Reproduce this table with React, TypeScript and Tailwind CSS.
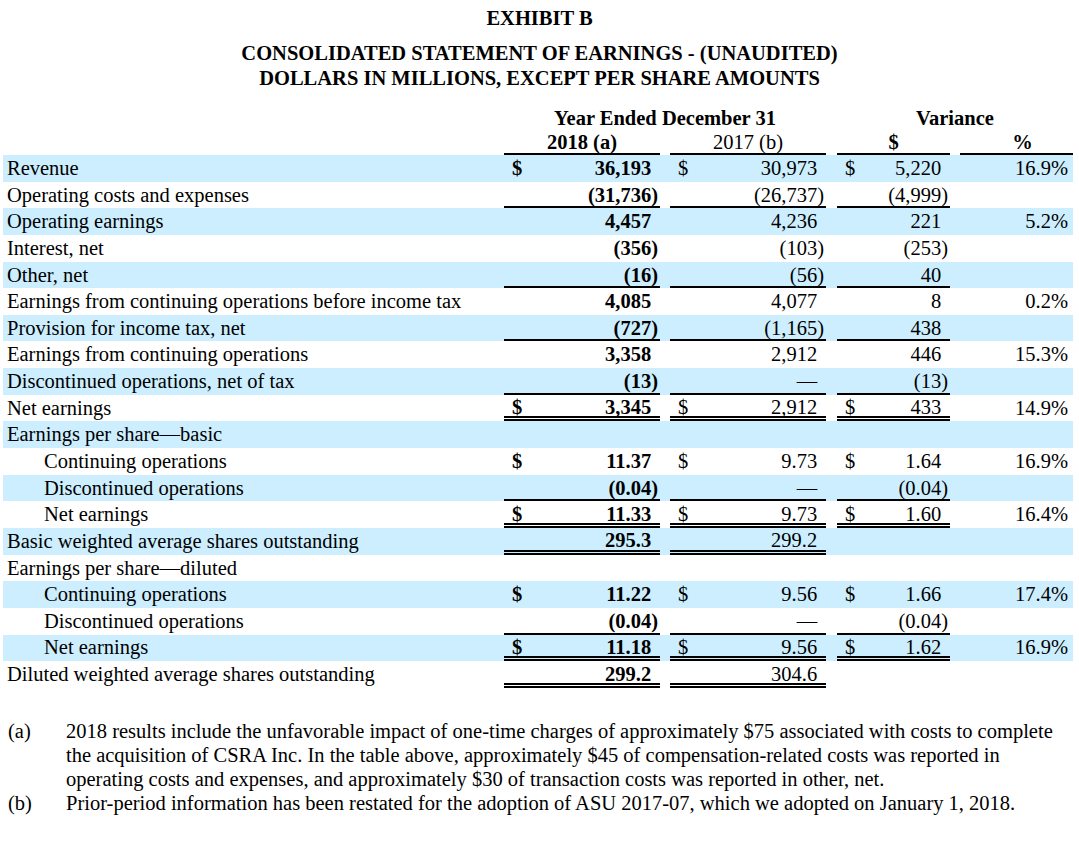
import React from "react";

type Cell = string | [string, string] | null;

type Row = {
  label: string;
  indent?: boolean;
  a?: Cell;
  b?: Cell;
  c?: Cell;
  p?: string;
  line?: "single" | "double";
  lineCols?: number;
};

const rows: Row[] = [
  { label: "Revenue", a: ["$", "36,193"], b: ["$", "30,973"], c: ["$", "5,220"], p: "16.9%" },
  { label: "Operating costs and expenses", a: "(31,736)", b: "(26,737)", c: "(4,999)", line: "single", lineCols: 3 },
  { label: "Operating earnings", a: "4,457", b: "4,236", c: "221", p: "5.2%" },
  { label: "Interest, net", a: "(356)", b: "(103)", c: "(253)" },
  { label: "Other, net", a: "(16)", b: "(56)", c: "40", line: "single", lineCols: 3 },
  { label: "Earnings from continuing operations before income tax", a: "4,085", b: "4,077", c: "8", p: "0.2%" },
  { label: "Provision for income tax, net", a: "(727)", b: "(1,165)", c: "438", line: "single", lineCols: 3 },
  { label: "Earnings from continuing operations", a: "3,358", b: "2,912", c: "446", p: "15.3%" },
  { label: "Discontinued operations, net of tax", a: "(13)", b: "—", c: "(13)", line: "single", lineCols: 3 },
  { label: "Net earnings", a: ["$", "3,345"], b: ["$", "2,912"], c: ["$", "433"], p: "14.9%", line: "double", lineCols: 3 },
  { label: "Earnings per share—basic" },
  { label: "Continuing operations", indent: true, a: ["$", "11.37"], b: ["$", "9.73"], c: ["$", "1.64"], p: "16.9%" },
  { label: "Discontinued operations", indent: true, a: "(0.04)", b: "—", c: "(0.04)", line: "single", lineCols: 3 },
  { label: "Net earnings", indent: true, a: ["$", "11.33"], b: ["$", "9.73"], c: ["$", "1.60"], p: "16.4%", line: "double", lineCols: 3 },
  { label: "Basic weighted average shares outstanding", a: "295.3", b: "299.2", line: "double", lineCols: 2 },
  { label: "Earnings per share—diluted" },
  { label: "Continuing operations", indent: true, a: ["$", "11.22"], b: ["$", "9.56"], c: ["$", "1.66"], p: "17.4%" },
  { label: "Discontinued operations", indent: true, a: "(0.04)", b: "—", c: "(0.04)", line: "single", lineCols: 3 },
  { label: "Net earnings", indent: true, a: ["$", "11.18"], b: ["$", "9.56"], c: ["$", "1.62"], p: "16.9%", line: "double", lineCols: 3 },
  { label: "Diluted weighted average shares outstanding", a: "299.2", b: "304.6", line: "double", lineCols: 2 },
];

const Money = ({ v, bold, width, line }: { v?: Cell; bold?: boolean; width: string; line?: "single" | "double" }) => {
  const sign = Array.isArray(v) ? v[0] : "";
  const num = Array.isArray(v) ? v[1] : v || "";
  const border =
    line === "double"
      ? "border-b-[5px] border-double border-black pt-[4px]"
      : line === "single"
        ? "border-b-2 border-black pt-[2px]"
        : "";
  return (
    <div className={`${width} h-full flex items-center justify-between pl-[8px] pr-[2px] ${bold ? "font-bold" : ""} ${border}`}>
      <span>{sign}</span>
      <span>
        {num}
        {num && !num.endsWith(")") && <span className="invisible">)</span>}
      </span>
    </div>
  );
};

export default function App() {
  return (
    <div className="w-[1079px] h-[844px] bg-white text-black font-['Liberation_Serif',serif] overflow-hidden">
      <div className="pt-[6px] flex flex-col items-center font-bold text-[20.5px]">
        <div className="leading-[24px]">EXHIBIT B</div>
        <div className="leading-[25px] mt-[11px]">CONSOLIDATED STATEMENT OF EARNINGS - (UNAUDITED)</div>
        <div className="leading-[25px]">DOLLARS IN MILLIONS, EXCEPT PER SHARE AMOUNTS</div>
      </div>

      <div className="mt-[14px] pl-[3px] text-[20.5px]">
        <div className="flex h-[26px] items-center font-bold">
          <div className="w-[501px]" />
          <div className="w-[322px] text-center">Year Ended December 31</div>
          <div className="w-[11px]" />
          <div className="w-[236px] text-center">Variance</div>
        </div>
        <div className="flex h-[24px] leading-[22px]">
          <div className="w-[501px]" />
          <div className="w-[156px] text-center font-bold border-b-2 border-black">2018 (a)</div>
          <div className="w-[10px]" />
          <div className="w-[156px] text-center border-b-2 border-black">2017 (b)</div>
          <div className="w-[11px]" />
          <div className="w-[113px] text-center font-bold border-b-2 border-black">$</div>
          <div className="w-[10px]" />
          <div className="w-[113px] text-center font-bold border-b-2 border-black pl-[12px]">%</div>
        </div>

        {rows.map((r, i) => (
          <div key={i} className={`flex h-[26.65px] w-[1070px] ${i % 2 === 0 ? "bg-[#cceeff]" : ""}`}>
            <div className={`w-[501px] h-full flex items-center ${r.indent ? "pl-[41px]" : "pl-[4px]"}`}>{r.label}</div>
            <Money v={r.a} bold width="w-[156px]" line={r.lineCols ? r.line : undefined} />
            <div className="w-[10px]" />
            <Money v={r.b} width="w-[156px]" line={r.lineCols ? r.line : undefined} />
            <div className="w-[11px]" />
            <Money v={r.c} width="w-[113px]" line={r.lineCols === 3 ? r.line : undefined} />
            <div className="w-[10px]" />
            <div className="w-[113px] h-full flex items-center justify-end pr-[5px]">{r.p}</div>
          </div>
        ))}
      </div>

      <div className="mt-[31px] pl-[8px] text-[20.5px] leading-[24px]">
        <div className="flex">
          <div className="w-[58px] shrink-0">(a)</div>
          <div className="whitespace-nowrap">
            2018 results include the unfavorable impact of one-time charges of approximately $75 associated with costs to complete
            <br />
            the acquisition of CSRA Inc. In the table above, approximately $45 of compensation-related costs was reported in
            <br />
            operating costs and expenses, and approximately $30 of transaction costs was reported in other, net.
          </div>
        </div>
        <div className="flex">
          <div className="w-[58px] shrink-0">(b)</div>
          <div className="whitespace-nowrap">
            Prior-period information has been restated for the adoption of ASU 2017-07, which we adopted on January 1, 2018.
          </div>
        </div>
      </div>
    </div>
  );
}
